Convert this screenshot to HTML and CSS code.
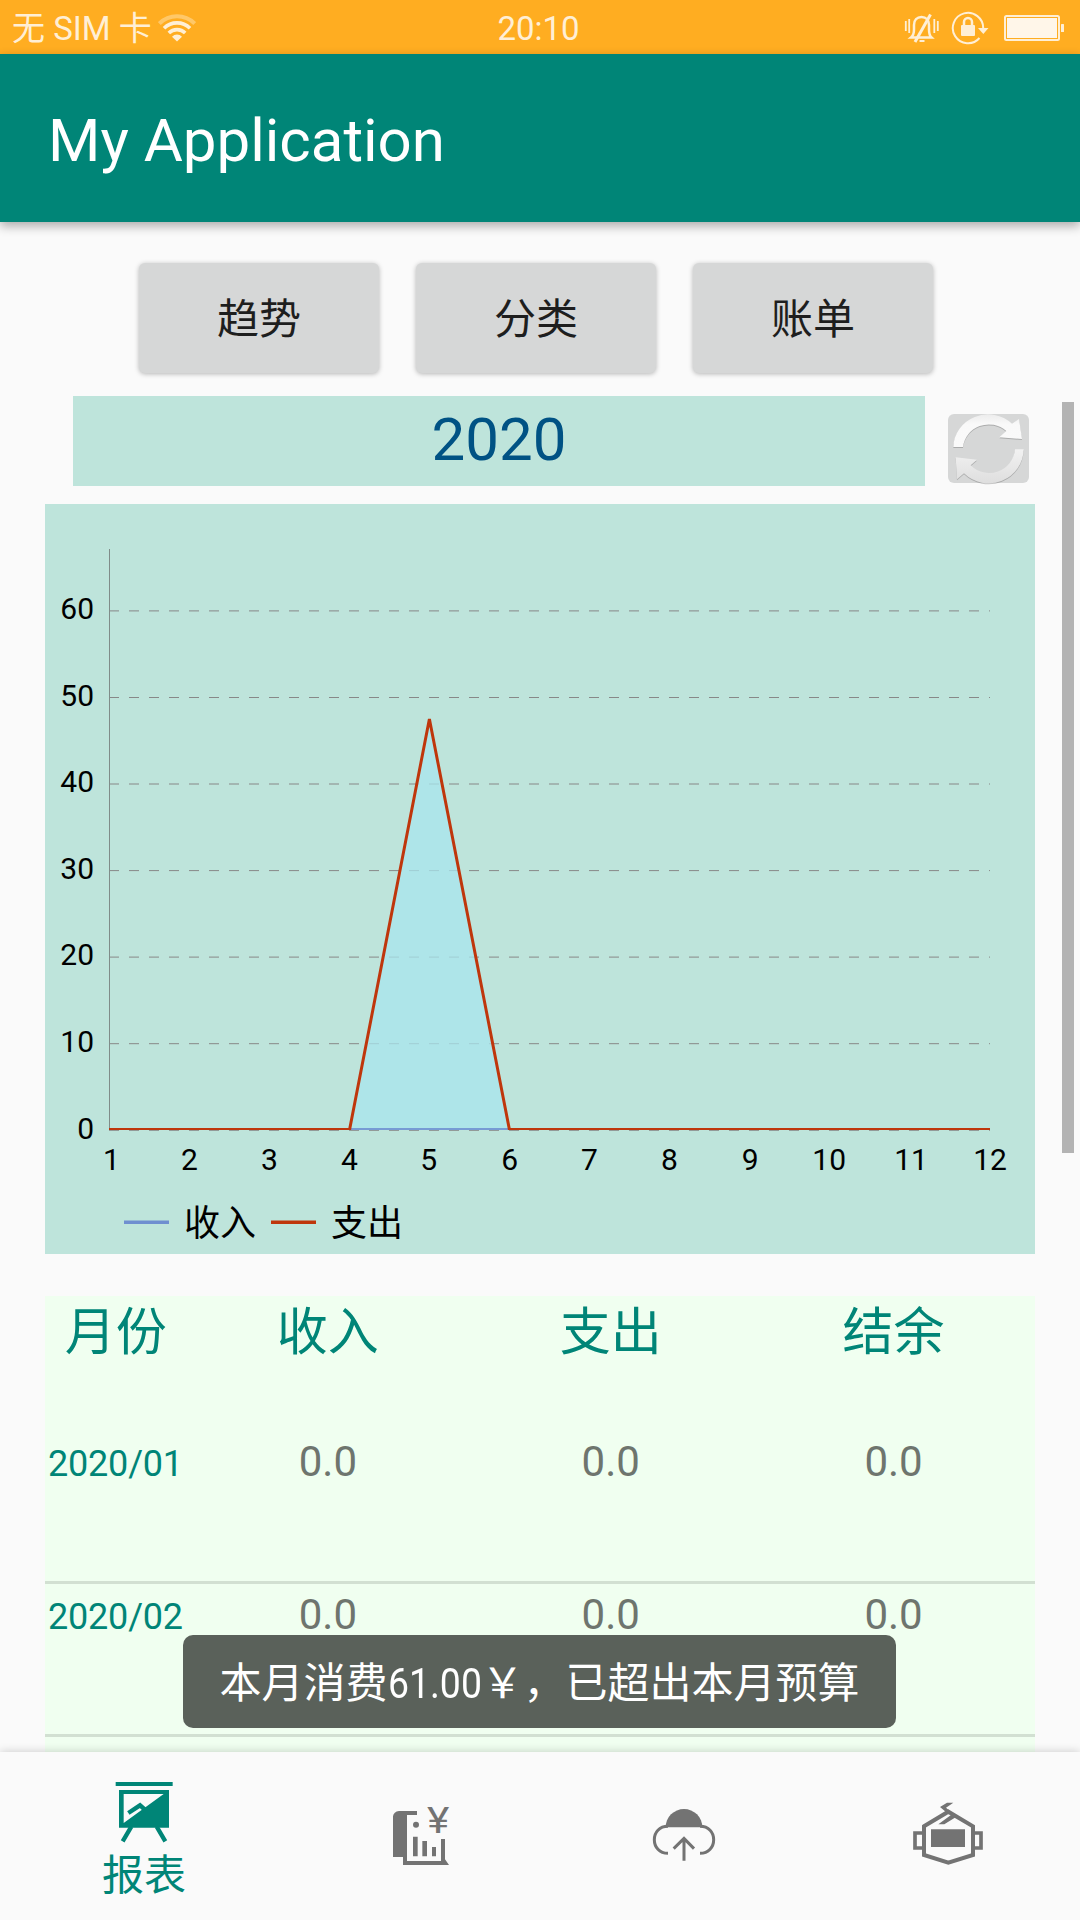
FILE: index.html
```html
<!DOCTYPE html>
<html lang="zh-CN">
<head>
    <meta charset="UTF-8">
    <meta name="viewport" content="width=device-width, initial-scale=1.0">
    <title>My Application</title>
    <link rel="stylesheet" href="styles.css">
</head>
<body>
    <div class="status-bar">
        <div class="status-left">
            <span>无 SIM 卡</span>
            <svg class="wifi" width="38" height="28" viewBox="0 0 38 28" fill="none" stroke="#ffefd5">
                <path d="M1.3 9.5A25 25 0 0 1 36.7 9.5" stroke-width="4" opacity=".4"/>
                <path d="M6 14.2A18.6 18.6 0 0 1 32 14.2" stroke-width="3.6"/>
                <path d="M10.8 19A11.7 11.7 0 0 1 27.2 19" stroke-width="3.6"/>
                <path d="M19 27.5L14 22.7A7 7 0 0 1 24 22.7z" fill="#ffefd5" stroke="none"/>
            </svg>
        </div>
        <div class="status-time">20:10</div>
        <div class="status-right">
            <svg width="36" height="32" viewBox="0 0 36 32" fill="none" stroke="#ffefd5">
                <path d="M1.8 9v10M5.2 7v14M30.3 7v14M33.8 9v10" stroke-width="1.8"/>
                <path d="M7 25.5h20.500c-1.800-1.600-2.500-4-2.500-8v-4.500c0-5-3-8-7.500-8s-7.500 3-7.500 8v4.500c0 4-.8 6.200-3 8z" stroke-width="2.500"/>
                <path d="M26.500 2.500L11 30" stroke-width="3"/>
                <path d="M15.500 29h5" stroke-width="2"/>
            </svg>
            <svg class="lock" width="38" height="34" viewBox="0 0 38 34">
                <path d="M28.500 27A15.200 15.200 0 1 1 32.200 17.500" fill="none" stroke="#ffefd5" stroke-width="2"/>
                <path d="M27 17h10.500l-5.200 6z" fill="#ffefd5"/>
                <rect x="10" y="14" width="14" height="11" rx="1" fill="#ffefd5"/>
                <path d="M13 15v-4a4 4 0 0 1 8 0v4" fill="none" stroke="#ffefd5" stroke-width="2.500"/>
            </svg>
            <svg class="battery" width="60" height="26" viewBox="0 0 60 26">
                <rect x="1" y="1" width="54" height="24" rx="1.500" fill="none" stroke="#ffefd5" stroke-width="2"/>
                <rect x="3" y="3" width="50" height="20" fill="#fff6e9"/>
                <rect x="57" y="9" width="3" height="8" rx=".5" fill="#ffefd5"/>
            </svg>
        </div>
    </div>

    <div class="app-bar">
        <h1>My Application</h1>
    </div>

    <div class="content">
        <div class="tabs">
            <button class="tab-btn">趋势</button>
            <button class="tab-btn">分类</button>
            <button class="tab-btn">账单</button>
        </div>

        <div class="year-row">
            <div class="year">2020</div>
            <button class="refresh-btn">
                <svg width="75" height="74" viewBox="0 0 225 222">
                    <defs>
                        <linearGradient id="arrow-top" x1="0" y1="0" x2="0" y2="1">
                            <stop offset="0" stop-color="#ececec"/>
                            <stop offset=".3" stop-color="#f9f9f9"/>
                            <stop offset="1" stop-color="#fafafa"/>
                        </linearGradient>
                        <linearGradient id="arrow-bottom" x1="0" y1="0" x2="0" y2="1">
                            <stop offset="0" stop-color="#f2f2f2"/>
                            <stop offset="1" stop-color="#dedede"/>
                        </linearGradient>
                    </defs>
                    <g class="arrows">
                        <path d="M7 99A104 100 0 0 1 183 29L204 15L213 75L145 70L166 51A78 76 0 0 0 36 99z" fill="url(#arrow-top)"/>
                        <path d="M218 106A105 103 0 0 1 39 178L18 196L14 130L78 137L59 154A78 78 0 0 0 192 106z" fill="url(#arrow-bottom)"/>
                    </g>
                </svg>
            </button>
        </div>

        <svg class="chart" width="990" height="750" viewBox="45 504 990 750">
            <defs>
                <clipPath id="plot">
                    <rect x="109" y="549" width="881" height="581"/>
                </clipPath>
            </defs>
            <g class="grid">
                <path d="M109 610.900H990"/>
                <path d="M109 697.500H990"/>
                <path d="M109 784H990"/>
                <path d="M109 870.600H990"/>
                <path d="M109 957.100H990"/>
                <path d="M109 1043.700H990"/>
                <path d="M109 1130.300H990"/>
            </g>
            <path class="axis" d="M109.500 549V1130"/>
            <g clip-path="url(#plot)">
                <path class="line-income" d="M109.500 1129.500H990"/>
                <path class="area" d="M349.600 1130L429.400 719L509.400 1130z"/>
                <path class="line-income" d="M349.600 1129.500H509.400" opacity=".8"/>
                <path class="line-expense" d="M109 1129.500H349.600L429.400 719L509.400 1129.500H990"/>
            </g>
            <g class="y-labels">
                <text x="94" y="619">60</text>
                <text x="94" y="706">50</text>
                <text x="94" y="792">40</text>
                <text x="94" y="879">30</text>
                <text x="94" y="965">20</text>
                <text x="94" y="1052">10</text>
                <text x="94" y="1138.500">0</text>
            </g>
            <g class="x-labels">
                <text x="111.500" y="1170">1</text>
                <text x="189.400" y="1170">2</text>
                <text x="269.400" y="1170">3</text>
                <text x="349.400" y="1170">4</text>
                <text x="428.800" y="1170">5</text>
                <text x="509.700" y="1170">6</text>
                <text x="589.400" y="1170">7</text>
                <text x="669.500" y="1170">8</text>
                <text x="750.200" y="1170">9</text>
                <text x="829.200" y="1170">10</text>
                <text x="911" y="1170">11</text>
                <text x="990" y="1170">12</text>
            </g>
            <g class="legend">
                <path d="M124 1222.300H169" stroke="#6f8fd0"/>
                <text x="184" y="1236">收入</text>
                <path d="M271 1222.300H316" stroke="#bf360c"/>
                <text x="331" y="1236">支出</text>
            </g>
        </svg>

        <div class="report">
            <div class="report-head">
                <span>月份</span><span>收入</span><span>支出</span><span>结余</span>
            </div>
            <div class="report-row">
                <span class="month">2020/01</span><span>0.0</span><span>0.0</span><span>0.0</span>
            </div>
            <div class="report-row">
                <span class="month">2020/02</span><span>0.0</span><span>0.0</span><span>0.0</span>
            </div>
            <div class="report-row">
                <span class="month">2020/03</span><span>0.0</span><span>0.0</span><span>0.0</span>
            </div>
        </div>
    </div>

    <div class="scrollbar"></div>
    <div class="toast">本月消费<span class="amount">61.00</span>￥，已超出本月预算</div>

    <div class="bottom-nav">
        <div class="nav-item active">
            <svg width="72" height="72" viewBox="84 48 216 216">
                <path d="M107 66h171v12H107z" fill="currentColor"/>
                <path d="M117 90h150v113H117zM131 102v87L251 102z" fill="currentColor" fill-rule="evenodd"/>
                <path d="M145 159L180 136L196 150M154 200L128 244M230 200L256 244" fill="none" stroke="currentColor" stroke-width="13"/>
            </svg>
            <span>报表</span>
        </div>
        <div class="nav-item">
            <svg width="72" height="72" viewBox="912 120 216 216" fill="currentColor">
                <path d="M939 169Q941 155 957 153H1011V165H981V303H1083V237H1095V298L1107 315H969V291H939z"/>
                <circle cx="1008" cy="194" r="9"/>
                <path d="M999 230h14v59h-14zM1027 243h14v46h-14zM1056 261h12v28h-12z"/>
                <text class="yen" x="1041" y="219" textLength="67" lengthAdjust="spacingAndGlyphs">¥</text>
            </svg>
        </div>
        <div class="nav-item">
            <svg width="72" height="72" viewBox="84 120 216 216" fill="none" stroke="currentColor" stroke-width="9">
                <path d="M137 202A55 55 0 0 1 247 202z" fill="currentColor" stroke="none"/>
                <path d="M144 280C118 280 103 261 103 239S118 199 144 199M240 280C266 280 281 261 281 239S266 199 240 199"/>
                <path d="M192 302V236M161 266L192 235L222 266"/>
            </svg>
        </div>
        <div class="nav-item">
            <svg width="72" height="72" viewBox="876 120 216 216" fill="none" stroke="currentColor" stroke-width="12">
                <path d="M912 199L985 155L1059 199V285L985 308L912 285z"/>
                <path d="M906 219H885V264H906M1065 219H1083V264H1065" stroke-width="11"/>
                <path d="M960 141L981 128H1000L978 143L996 158L986 163zM955 193L994 164L1007 172L973 193z" fill="currentColor" stroke="none"/>
                <path d="M933 208h102v53H933z" fill="currentColor" stroke="none"/>
            </svg>
        </div>
    </div>
</body>
</html>
```
FILE: styles.css
```css
* {
    box-sizing: border-box;
}
body {
    margin: 0;
    width: 1080px;
    height: 1920px;
    position: relative;
    overflow: hidden;
    display: flex;
    flex-direction: column;
    background: #fafafa;
    font-family: Roboto, "Noto Sans CJK SC", sans-serif;
}
.status-bar {
    height: 54px;
    flex: none;
    display: grid;
    grid-template-columns: 1fr auto 1fr;
    align-items: center;
    padding: 0 16px 0 12px;
    background: #ffad21;
    color: #ffefd5;
    font-size: 33px;
    line-height: 52px;
}
.status-left {
    display: flex;
    align-items: center;
}
.status-left span,
.status-time {
    padding-top: 3px;
}
.status-time {
    padding-left: 1px;
}
.wifi {
    margin-left: 6px;
}
.status-right {
    display: flex;
    align-items: center;
    justify-content: flex-end;
}
.lock {
    margin-left: 11px;
}
.battery {
    margin-left: 15px;
}
.app-bar {
    height: 168px;
    flex: none;
    display: flex;
    align-items: center;
    padding: 4px 48px 0;
    background: #008577;
    box-shadow: 0 4px 10px rgba(0, 0, 0, 0.32);
    z-index: 1;
}
.app-bar h1 {
    margin: 0;
    color: #fff;
    font-size: 60px;
    font-weight: 400;
}
.content {
    flex: 1;
    min-height: 0;
    overflow: hidden;
}
.tabs {
    display: flex;
    gap: 37px;
    padding: 41px 0 0 139px;
}
.tab-btn {
    width: 240px;
    height: 110px;
    padding: 0 0 5px;
    border: none;
    border-radius: 6px;
    background: #d6d7d7;
    box-shadow: 0 1px 5px rgba(0, 0, 0, 0.28);
    color: #1e1e1e;
    font-family: inherit;
    font-size: 42px;
}
.year-row {
    display: flex;
    margin-top: 23px;
    padding-left: 73px;
}
.year {
    width: 852px;
    height: 90px;
    background: #bee4db;
    color: #005284;
    font-size: 60px;
    line-height: 87px;
    text-align: center;
}
.refresh-btn {
    width: 81px;
    height: 69px;
    margin: 18px 0 0 23px;
    padding: 0 0 0 3px;
    border: none;
    border-radius: 6px;
    background: #d6d7d7;
}
.refresh-btn svg {
    display: block;
    overflow: visible;
}
.arrows {
    filter: drop-shadow(0 3px 2px rgba(0, 0, 0, 0.2));
}
.chart {
    display: block;
    margin: 18px 45px 0;
    background: #bee4db;
}
.chart text {
    font-size: 30px;
    fill: #000;
}
.grid path {
    stroke: #888;
    stroke-width: 1;
    stroke-dasharray: 10 10;
}
.axis {
    stroke: #808c89;
    stroke-width: 1;
}
.area {
    fill: #a8e6ee;
    fill-opacity: 0.75;
}
.line-income {
    stroke: #6f8fd0;
    stroke-width: 3;
}
.line-expense {
    fill: none;
    stroke: #bf360c;
    stroke-width: 3;
}
.y-labels {
    text-anchor: end;
}
.x-labels {
    text-anchor: middle;
}
.legend path {
    stroke-width: 3.5;
}
.chart .legend text {
    font-size: 36px;
}
.report {
    margin: 42px 45px 0;
    background: #f0fff0;
}
.report-head,
.report-row {
    display: grid;
    grid-template-columns: 1fr 2fr 2fr 2fr;
    text-align: center;
}
.report-head {
    height: 135px;
    color: #008577;
    font-size: 51px;
    line-height: 74px;
}
.report-row {
    height: 153px;
    align-items: baseline;
    border-bottom: 3px solid #d2e0d2;
    color: #6e756e;
    font-size: 42px;
    line-height: 62px;
}
.month {
    padding-left: 3px;
    text-align: left;
    white-space: nowrap;
    color: #008577;
    font-size: 36px;
    letter-spacing: -0.2px;
}
.scrollbar {
    position: absolute;
    top: 402px;
    left: 1062px;
    width: 12px;
    height: 751px;
    background: #b3b3b3;
}
.toast {
    position: absolute;
    top: 1635px;
    left: 183px;
    width: 713px;
    height: 93px;
    border-radius: 10px;
    background: #5a615a;
    color: #fff;
    font-size: 42px;
    line-height: 97px;
    text-align: center;
    white-space: nowrap;
    z-index: 2;
}
.amount {
    display: inline-block;
    margin-right: -11.5px;
    transform: scaleX(0.89);
    transform-origin: left;
}
.bottom-nav {
    height: 168px;
    flex: none;
    display: flex;
    background: #fafafa;
    box-shadow: 0 0 9px rgba(0, 0, 0, 0.2);
    z-index: 1;
}
.nav-item {
    width: 264px;
    padding-top: 48px;
    display: flex;
    flex-direction: column;
    align-items: center;
    color: #737373;
}
.nav-item.active {
    width: 288px;
    padding-top: 24px;
    color: #008577;
    font-size: 42px;
    line-height: 56px;
}
.yen {
    font-size: 110px;
    font-weight: 400;
}
```
